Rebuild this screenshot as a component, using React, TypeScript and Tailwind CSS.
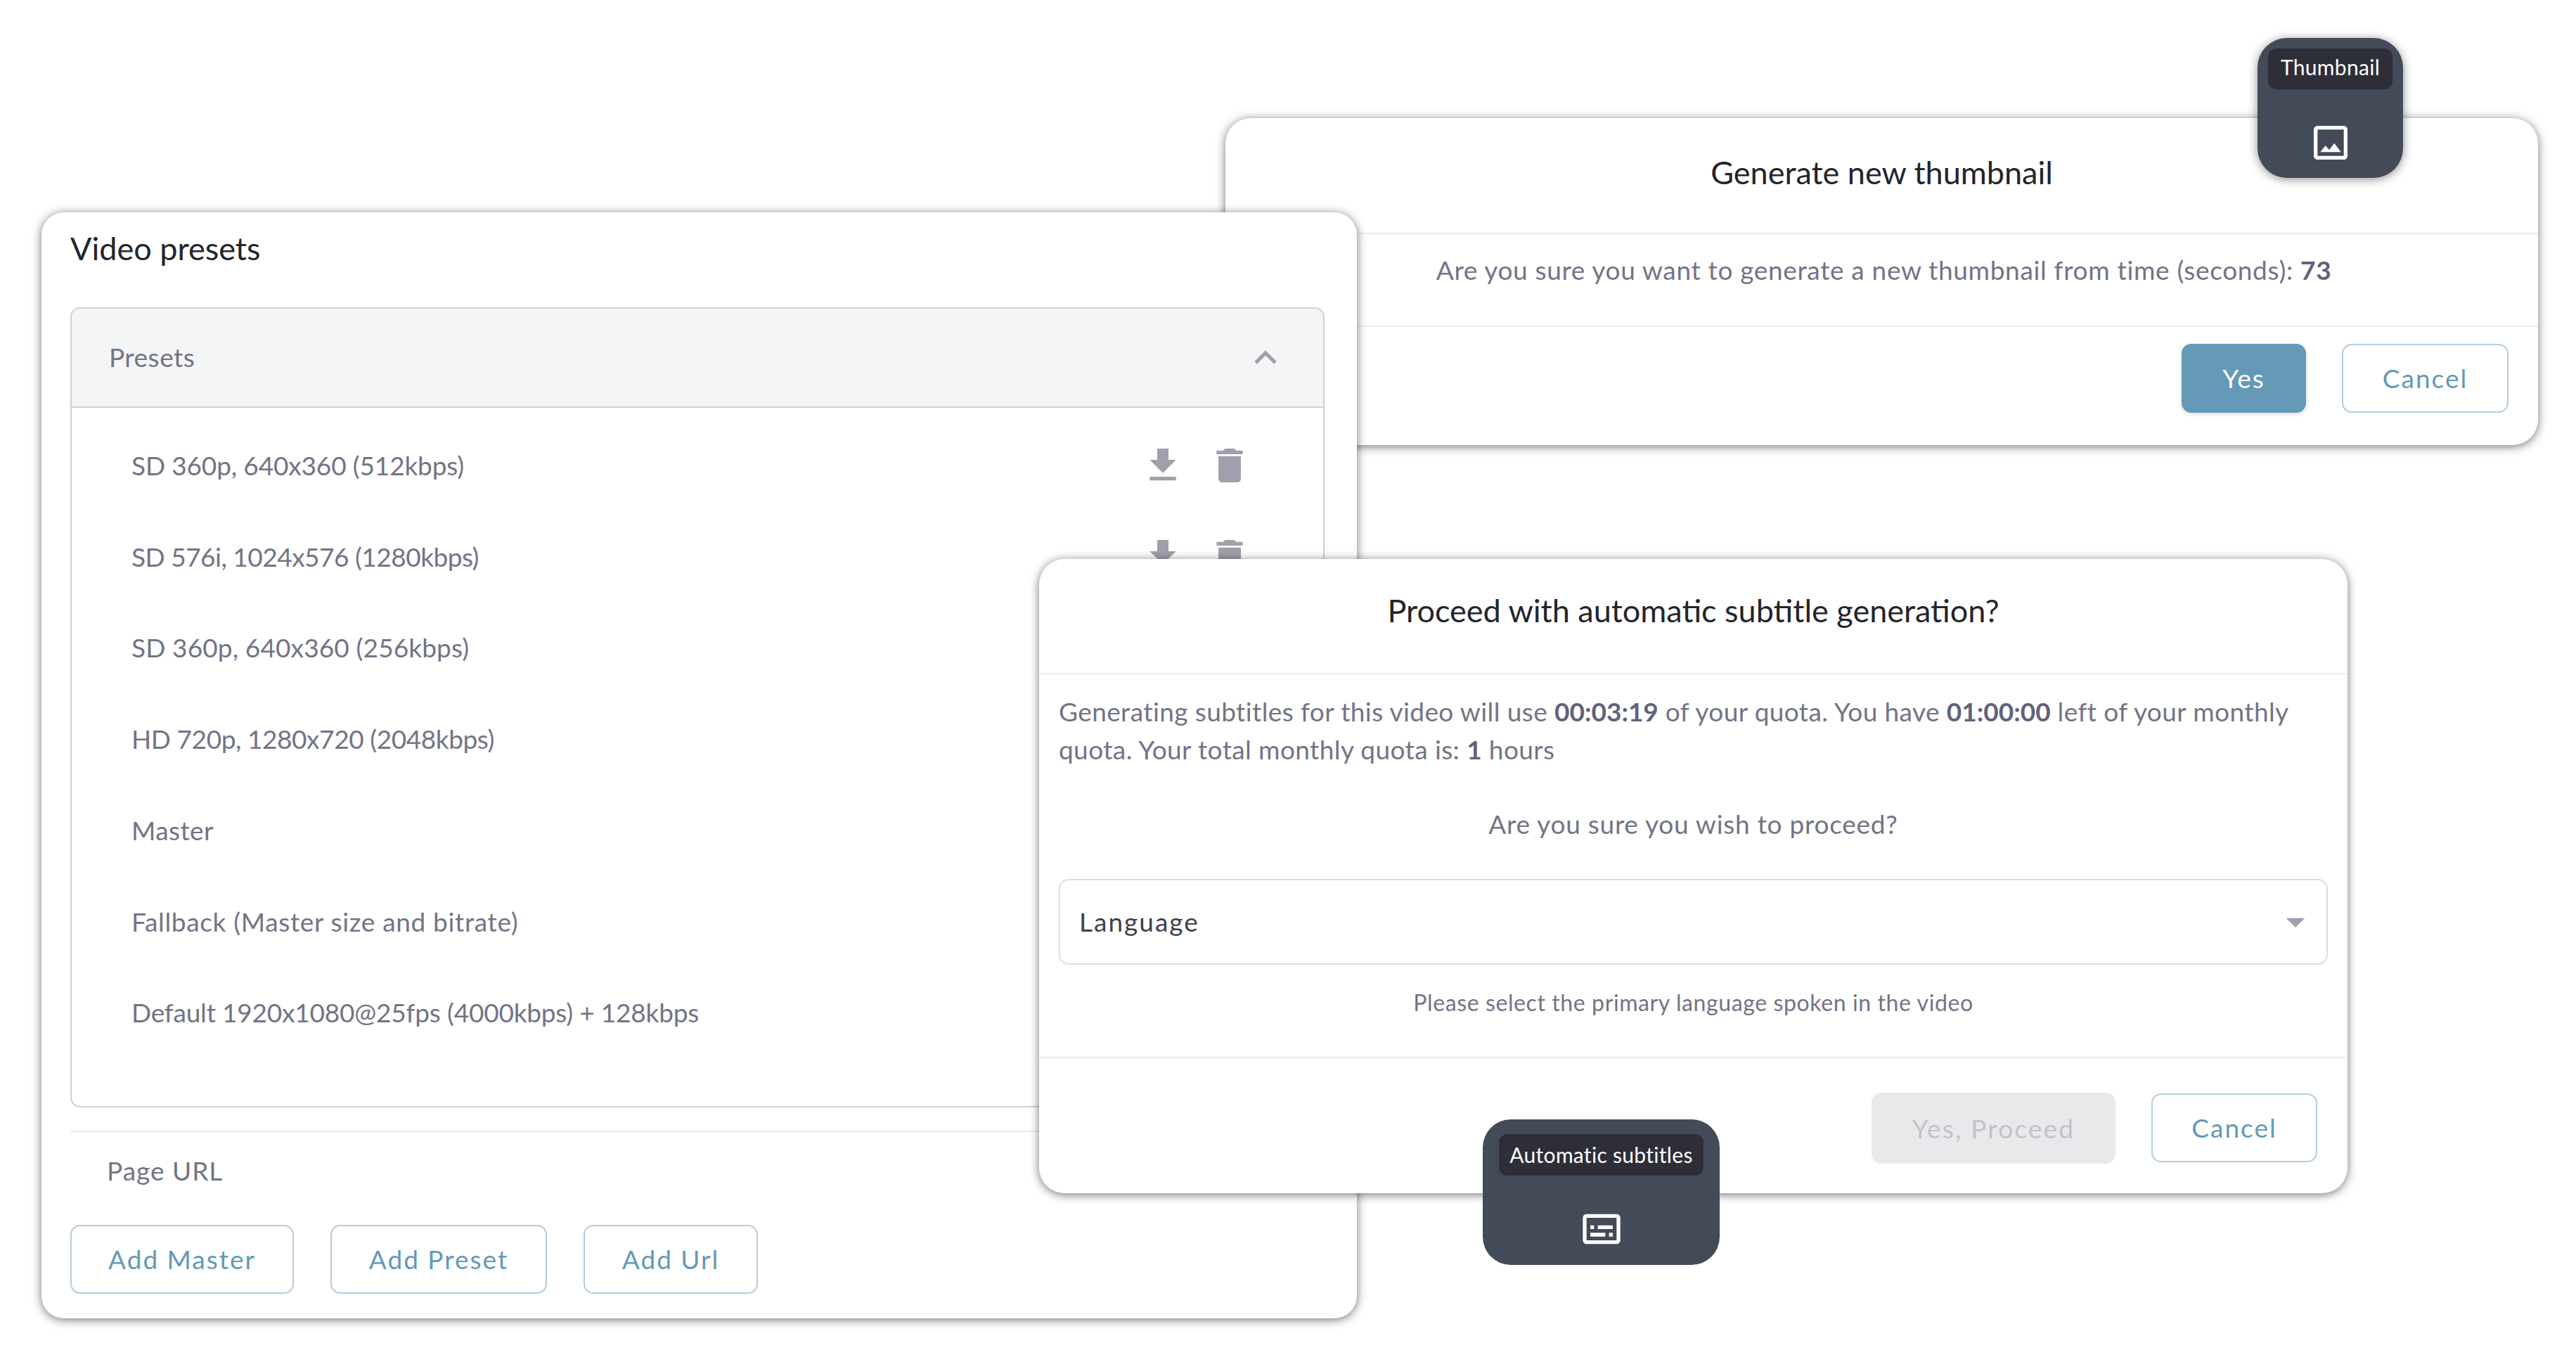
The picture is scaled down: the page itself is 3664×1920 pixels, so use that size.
const FONT = "font-['Lato','Liberation_Sans',sans-serif]";

function DownloadIcon() {
  return (
    <svg viewBox="0 0 24 24" className="w-16 h-16 fill-[#a0a0ac]">
      <path d="M19 9h-4V3H9v6H5l7 7 7-7zM5 18v2h14v-2H5z" />
    </svg>
  );
}
function TrashIcon() {
  return (
    <svg viewBox="0 0 24 24" className="w-16 h-16 fill-[#a0a0ac]">
      <path d="M6 19c0 1.1.9 2 2 2h8c1.1 0 2-.9 2-2V7H6v12zM19 4h-3.5l-1-1h-5l-1 1H5v2h14V4z" />
    </svg>
  );
}

const rows = [
  { label: "SD 360p, 640x360 (512kbps)", track: "tracking-[-0.15px]" },
  { label: "SD 576i, 1024x576 (1280kbps)", track: "tracking-[-0.5px]" },
  { label: "SD 360p, 640x360 (256kbps)", track: "tracking-[0.13px]" },
  { label: "HD 720p, 1280x720 (2048kbps)", track: "tracking-[-0.43px]" },
  { label: "Master", track: "tracking-[0.4px]" },
  { label: "Fallback (Master size and bitrate)", track: "tracking-[0.67px]" },
  { label: "Default 1920x1080@25fps (4000kbps) + 128kbps", track: "tracking-[-0.2px]" },
];

function OutlineButton({ label, className }: { label: string; className: string }) {
  return (
    <div className={`flex items-center justify-center h-[98px] rounded-[14px] border-2 border-[#b3cddd] bg-white text-[#6499b8] text-[37px] tracking-[2px] ${className}`}>
      {label}
    </div>
  );
}

function PresetsCard() {
  return (
    <div className="absolute left-[59px] top-[302px] w-[1871px] h-[1573px] rounded-[32px] bg-white shadow-[0_2px_14px_rgba(0,0,0,0.55)] pl-[41px] pr-[46px]">
      <div className="h-[135px] pt-[24px] text-[45px] leading-[54px] text-[#24242c]">Video presets</div>
      <div className="h-[1138px] rounded-[14px] border-2 border-[#cfd0d3] overflow-hidden">
        <div className="h-[141px] flex items-center justify-between pl-[53px] pr-[58px] bg-[#f4f5f7] border-b-2 border-[#cfd0d3] text-[37px] text-[#737386] tracking-[0.5px]">
          <span className="-mt-[2px]">Presets</span>
          <svg viewBox="0 0 24 24" className="w-[48px] h-[48px] fill-none stroke-[#a0a0ac] stroke-[2.6]">
            <path d="M5 15.5l7-7 7 7" />
          </svg>
        </div>
        <div className="pt-[17px] pl-[85px] pr-[101px]">
          {rows.map((r) => (
            <div key={r.label} className={`h-[129.7px] flex items-center justify-between text-[37px] text-[#737386] ${r.track}`}>
              <span>{r.label}</span>
              <div className="flex items-center gap-[31px]">
                <DownloadIcon />
                <TrashIcon />
              </div>
            </div>
          ))}
        </div>
      </div>
      <div className="mt-[33px] border-t-2 border-[#ebebee] h-[134px] pl-[52px] pt-[30px] text-[37px] leading-[50px] text-[#737386] tracking-[1px]">
        Page URL
      </div>
      <div className="flex gap-[52px]">
        <OutlineButton label="Add Master" className="w-[318px]" />
        <OutlineButton label="Add Preset" className="w-[308px]" />
        <OutlineButton label="Add Url" className="w-[248px]" />
      </div>
    </div>
  );
}

function ThumbnailDialog() {
  return (
    <div className="absolute left-[1743px] top-[168px] w-[1867px] h-[465px] rounded-[36px] bg-white shadow-[0_2px_14px_rgba(0,0,0,0.55)]">
      <div className="h-[165px] flex items-center justify-center pb-[8px] text-[45px] text-[#24242c] border-b-2 border-[#ebebee]">
        Generate new thumbnail
      </div>
      <div className="h-[132px] flex items-start justify-center pt-[26px] pl-[6px] text-[37px] leading-[50px] text-[#737386] tracking-[0.67px] border-b-2 border-[#ebebee]">
        <span>
          Are you sure you want to generate a new thumbnail from time (seconds): <b className="font-bold text-[#62627a]">73</b>
        </span>
      </div>
      <div className="flex justify-end gap-[51px] pt-[24px] pr-[42px]">
        <div className="w-[177px] h-[98px] flex items-center justify-center rounded-[14px] bg-[#6499b8] text-white text-[37px] tracking-[2px] shadow-[0_2px_6px_rgba(0,0,0,0.15)]">Yes</div>
        <OutlineButton label="Cancel" className="w-[237px]" />
      </div>
    </div>
  );
}

function SubtitleDialog() {
  return (
    <div className="absolute left-[1478px] top-[795px] w-[1861px] h-[902px] rounded-[36px] bg-white shadow-[0_2px_14px_rgba(0,0,0,0.55)]">
      <div className="h-[164px] flex items-center justify-center pb-[14px] text-[45px] text-[#24242c] border-b-2 border-[#ebebee]">
        Proceed with automatic subtitle generation?
      </div>
      <div className="px-[28px]">
        <p className="pt-[26px] text-[37px] leading-[54px] text-[#737386] tracking-[0.4px]">
          Generating subtitles for this video will use <b className="font-bold text-[#62627a] tracking-[0px]">00:03:19</b> of your quota. You have <b className="font-bold text-[#62627a] tracking-[0px]">01:00:00</b> left of your monthly quota. Your total monthly quota is: <b className="font-bold text-[#62627a]">1</b> hours
        </p>
        <p className="mt-[52px] text-center text-[37px] leading-[54px] text-[#737386] tracking-[0.75px]">Are you sure you wish to proceed?</p>
        <div className="mt-[51px] h-[122px] rounded-[14px] border-2 border-[#dcdde0] flex items-center justify-between pl-[27px] pr-[12px] text-[37px] text-[#3f3f4c] tracking-[2px]">
          <span>Language</span>
          <svg viewBox="0 0 24 24" className="w-16 h-16 fill-[#a0a0ac]"><path d="M7 10l5 5 5-5z" /></svg>
        </div>
        <p className="mt-[32px] text-center text-[32px] leading-[44px] text-[#737386] tracking-[0.6px]">Please select the primary language spoken in the video</p>
      </div>
      <div className="mt-[55px] border-t-2 border-[#ebebee] flex justify-end pr-[43px] gap-[51px] pt-[50px]">
        <div className="w-[347px] h-[101px] -mt-[1px] flex items-center justify-center rounded-[14px] bg-[#e8e9eb] text-[#c2c4ca] text-[37px] tracking-[2.2px]">Yes, Proceed</div>
        <OutlineButton label="Cancel" className="w-[236px]" />
      </div>
    </div>
  );
}

export default function App() {
  return (
    <div className={`relative w-[3664px] h-[1920px] bg-white overflow-hidden ${FONT}`}>
      <ThumbnailDialog />
      <PresetsCard />
      <SubtitleDialog />
      <div className="absolute left-[3211px] top-[54px] w-[207px] h-[199px] rounded-[42px] bg-[#434a58] shadow-[0_2px_14px_rgba(0,0,0,0.45)] flex flex-col items-center">
        <div className="mt-[15px] w-[177px] h-[58px] pb-[5px] rounded-[12px] bg-[#2e2e38] flex items-center justify-center text-white text-[30px] tracking-[0.3px] whitespace-nowrap">
          Thumbnail
        </div>
        <svg viewBox="0 0 24 24" className="mt-[44px] w-16 h-16 fill-white">
          <path d="M19 3H5c-1.1 0-2 .9-2 2v14c0 1.1.9 2 2 2h14c1.1 0 2-.9 2-2V5c0-1.1-.9-2-2-2zm0 16H5V5h14v14zm-5.04-6.71l-2.75 3.54-1.96-2.36L6.5 17h11l-3.54-4.71z" />
        </svg>
      </div>
      <div className="absolute left-[2109px] top-[1592px] w-[337px] h-[207px] rounded-[40px] bg-[#434a58] flex flex-col items-center">
        <div className="mt-[21px] w-[291px] h-[59px] rounded-[12px] bg-[#2e2e38] flex items-center justify-center text-white text-[30px] tracking-[0.3px] whitespace-nowrap">
          Automatic subtitles
        </div>
        <svg viewBox="0 0 24 24" className="mt-[44px] w-16 h-16 fill-white">
          <path d="M20 4H4c-1.1 0-2 .9-2 2v12c0 1.1.9 2 2 2h16c1.1 0 2-.9 2-2V6c0-1.1-.9-2-2-2zm0 14H4V6h16v12zM6 10h2v2H6zm0 4h8v2H6zm10 0h2v2h-2zm-6-4h8v2h-8z" />
        </svg>
      </div>
    </div>
  );
}
